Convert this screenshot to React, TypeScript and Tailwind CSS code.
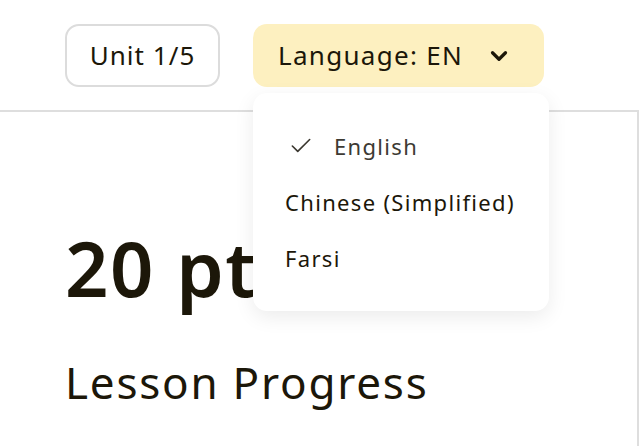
import { Check, ChevronDown } from 'lucide-react';

const languages = [
  { label: 'English', selected: true },
  { label: 'Chinese (Simplified)', selected: false },
  { label: 'Farsi', selected: false },
];

const App = () => {
  return (
    <div className="w-[639px] h-[446px] overflow-hidden bg-white text-[#1c1709] font-['Noto_Sans',sans-serif]">
      <header className="h-[110px] flex items-start gap-[33px] pl-[65px] pt-[24px]">
        <button className="h-[63px] w-[155px] rounded-[14px] border-2 border-[#dcdcdc] text-[26px] tracking-[0.04em] flex items-center justify-center">
          Unit 1/5
        </button>

        <div className="relative">
          <button className="h-[63px] w-[291px] rounded-[14px] bg-[#fdf0c0] text-[26px] tracking-[0.05em] flex items-center pl-[25px] pr-[32px] justify-between">
            <span>Language: EN</span>
            <ChevronDown size={26} strokeWidth={3} />
          </button>

          <div className="absolute left-0 top-[69px] w-[296px] h-[218px] rounded-[14px] bg-white shadow-[0_6px_20px_rgba(0,0,0,0.08)] z-10 flex flex-col pt-[41px] gap-[32px] text-[22px] tracking-[0.06em]">
            {languages.map((lang) => (
              <div key={lang.label} className="flex items-center h-[24px] pl-[32px]">
                {lang.selected ? (
                  <>
                    <Check size={26} strokeWidth={1.5} className="text-[#3a372f] mr-[20px] ml-[3px]" />
                    <span className="text-[#3d3a33]">{lang.label}</span>
                  </>
                ) : (
                  <span>{lang.label}</span>
                )}
              </div>
            ))}
          </div>
        </div>
      </header>

      <main className="border-t-2 border-r-2 border-[#dedede] w-[639px] h-[336px] pl-[65px] pt-[118px]">
        <h1 className="text-[76px] font-semibold leading-none tracking-[0.02em]">20 pt</h1>
        <h2 className="mt-[54px] text-[44px] leading-none tracking-[0.04em]">Lesson Progress</h2>
      </main>
    </div>
  );
};

export default App;
